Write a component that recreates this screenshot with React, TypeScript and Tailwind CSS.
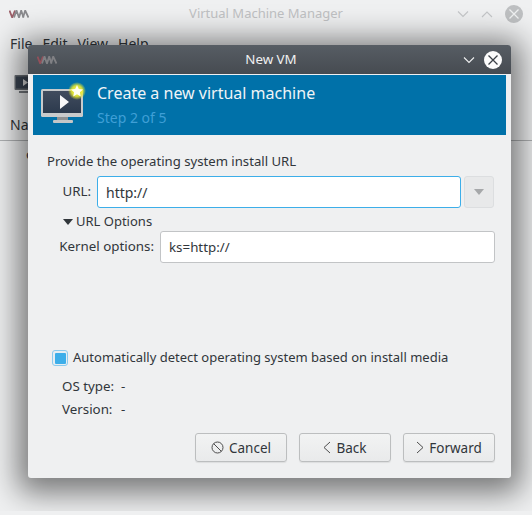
import React from "react";

function VmmLogo({ className }: { className?: string }) {
  return (
    <svg className={className} width="20" height="8" viewBox="0 0 20 8" fill="none" strokeWidth="1.8">
      <path d="M0.5 0.5 L3.2 7.5 L6 0.5" stroke="#93505a" />
      <path d="M5 7.5 L7.5 0.5 L10 7.5 L12.2 0.5 L14.5 7.5" stroke="#808084" />
      <path d="M14 7.5 L16.2 0.5 L19.5 7.5" stroke="#808084" />
    </svg>
  );
}

function MonitorIcon() {
  return (
    <svg width="46" height="46" viewBox="0 0 46 46">
      <defs>
        <radialGradient id="glow">
          <stop offset="0" stopColor="#ffff60" />
          <stop offset="0.6" stopColor="#e8ea30" stopOpacity="0.9" />
          <stop offset="1" stopColor="#e8ea30" stopOpacity="0" />
        </radialGradient>
        <linearGradient id="scr" x1="0" y1="0" x2="0" y2="1">
          <stop offset="0" stopColor="#414c5e" />
          <stop offset="1" stopColor="#2c3a4d" />
        </linearGradient>
      </defs>
      <rect x="0" y="7" width="42" height="28" rx="1.5" fill="#c8cacb" />
      <rect x="2" y="9" width="38" height="22" fill="url(#scr)" />
      <rect x="16" y="35" width="11" height="3" fill="#8f9192" />
      <rect x="12" y="38" width="20" height="3" rx="1" fill="#c4c6c7" />
      <path d="M19 13 L19 27 L28 20 Z" fill="#f8f8f8" />
      <circle cx="36" cy="9" r="9" fill="url(#glow)" />
      <path d="M36 3 L37.8 7 L42 7.5 L38.9 10.3 L39.8 14.5 L36 12.3 L32.2 14.5 L33.1 10.3 L30 7.5 L34.2 7 Z" fill="#fffff0" />
    </svg>
  );
}

function Chevron({ color, up }: { color: string; up?: boolean }) {
  return (
    <svg width="12" height="8" viewBox="0 0 12 8" fill="none" stroke={color} strokeWidth="1.1">
      <path d={up ? "M1 7 L6 2 L11 7" : "M1 1.5 L6 6.5 L11 1.5"} />
    </svg>
  );
}

function CloseCircle({ bg, fg }: { bg: string; fg: string }) {
  return (
    <svg width="18" height="18" viewBox="0 0 18 18">
      <circle cx="9" cy="9" r="9" fill={bg} />
      <path d="M4.5 4.5 L13.5 13.5 M13.5 4.5 L4.5 13.5" stroke={fg} strokeWidth="1.3" />
    </svg>
  );
}

function PushButton({ icon, label, width }: { icon: React.ReactNode; label: string; width: string }) {
  return (
    <div className={`${width} h-[29px] rounded-[3px] border border-[#bcbebf] bg-gradient-to-b from-[#f2f3f3] to-[#e9eaeb] shadow-[0_1px_1px_rgba(0,0,0,0.08)] flex items-center justify-center gap-[5px] text-[#31363b] text-[13.5px]`}>
      {icon}
      <span className="pt-[1px]">{label}</span>
    </div>
  );
}

export default function App() {
  return (
    <div className="relative w-[532px] h-[515px] overflow-hidden bg-[#eff0f1] text-[13.33px] text-[#31363b] font-['Noto_Sans',sans-serif]">
      {/* parent window */}
      <div className="h-[28px] flex items-center pl-[9px] pr-[9px] text-[#bfc1c3]">
        <VmmLogo className="opacity-90" />
        <span className="flex-1 text-center pl-[46px] text-[13px]">Virtual Machine Manager</span>
        <div className="flex items-center gap-[12px]">
          <Chevron color="#c4c6c8" />
          <Chevron color="#c4c6c8" up />
          <CloseCircle bg="#bec0c2" fg="#eff0f1" />
        </div>
      </div>
      <div className="flex gap-[10px] pl-[10px] pt-[6px] h-[46px] leading-[20px] text-[14px]">
        <span>File</span>
        <span>Edit</span>
        <span>View</span>
        <span>Help</span>
      </div>
      <div className="pl-[14px] h-[40px]">
        <svg width="22" height="22" viewBox="0 0 22 22">
          <rect x="0.5" y="1" width="21" height="15" rx="1" fill="#6b7076" />
          <rect x="2" y="2.5" width="18" height="12" fill="#3c4654" />
          <path d="M9 5 L9 12 L14 8.5 Z" fill="#ddd" />
          <rect x="5" y="17" width="12" height="2" fill="#777b80" />
        </svg>
      </div>
      <div className="pl-[10px] h-[26px] leading-[22px] text-[14px]">Name</div>
      <div className="border-t border-[#b0b2b4] pl-[26px] pt-[4px]">c</div>

      {/* dialog */}
      <div className="absolute left-[28px] top-[45px] w-[483px] h-[433px] rounded-[3px] bg-[#eff0f1] shadow-[0_5px_30px_10px_rgba(0,0,0,0.5)] flex flex-col overflow-hidden">
        <div className="h-[29px] shrink-0 bg-gradient-to-b from-[#575d64] to-[#464b51] flex items-center px-[9px] text-[#eff0f1]">
          <VmmLogo />
          <span className="flex-1 text-center pl-[22px]">New VM</span>
          <div className="flex items-center gap-[9px]">
            <Chevron color="#eff0f1" />
            <CloseCircle bg="#fcfcfc" fg="#3c4147" />
          </div>
        </div>
        <div className="mx-[5px] mt-[1px] h-[60px] shrink-0 bg-[#0071a9] flex items-center pl-[8px]">
          <MonitorIcon />
          <div className="ml-[10px]">
            <div className="text-[16px] leading-[22px] text-[#eff4f7]">Create a new virtual machine</div>
            <div className="text-[14px] leading-[21px] mt-[3px] text-[#3f9fd6]">Step 2 of 5</div>
          </div>
        </div>
        <div className="flex-1 flex flex-col pl-[19px] pr-[16px] pt-[16px] whitespace-nowrap">
          <div className="h-[20px] leading-[20px] text-[13.15px]">Provide the operating system install URL</div>
          <div className="flex items-center mt-[5px]">
            <span className="w-[44px] text-right">URL:</span>
            <div className="ml-[6px] w-[364px] h-[32px] rounded-[3px] border border-[#3daee9] bg-white flex items-center pl-[8px] text-[14px]">http://</div>
            <div className="ml-[3px] w-[30px] h-[32px] rounded-[3px] border border-[#dcdee0] bg-[#e8e9ea] flex items-center justify-center">
              <svg width="10" height="6" viewBox="0 0 10 6"><path d="M0 0 H10 L5 6 Z" fill="#a6a8aa" /></svg>
            </div>
          </div>
          <div className="flex items-center mt-[4px] pl-[16px] h-[20px]">
            <svg width="10" height="6" viewBox="0 0 10 6"><path d="M0 0 H10 L5 6 Z" fill="#31363b" /></svg>
            <span className="ml-[3px] text-[13px]">URL Options</span>
          </div>
          <div className="flex items-center mt-[-1px]">
            <span className="w-[107px] text-right">Kernel options:</span>
            <div className="ml-[6px] w-[335px] h-[32px] rounded-[3px] border border-[#c2c4c6] bg-white flex items-center pl-[8px] pt-[1px]">ks=http://</div>
          </div>
          <div className="flex items-center mt-[85px] pl-[5px] h-[20px]">
            <div className="w-[16px] h-[16px] rounded-[3px] border border-[#8ccbed] bg-[#e6eef3] flex items-center justify-center">
              <div className="w-[11px] h-[11px] rounded-[1px] bg-[#3daee9]" />
            </div>
            <span className="ml-[5px] text-[13px]">Automatically detect operating system based on install media</span>
          </div>
          <div className="mt-[8px] pl-[15px] h-[21px] leading-[21px] flex">
            <span className="w-[52px]">OS type:</span>
            <span className="ml-[7px]">-</span>
          </div>
          <div className="mt-[2px] pl-[15px] h-[21px] leading-[21px] flex">
            <span className="w-[52px]">Version:</span>
            <span className="ml-[7px]">-</span>
          </div>
          <div className="flex justify-end gap-[12px] mt-[13px]">
            <PushButton
              width="w-[92px]"
              label="Cancel"
              icon={
                <svg width="13" height="13" viewBox="0 0 13 13" fill="none" stroke="#4d4d4d" strokeWidth="1">
                  <circle cx="6.5" cy="6.5" r="5.5" />
                  <path d="M2.6 2.6 L10.4 10.4" />
                </svg>
              }
            />
            <PushButton
              width="w-[92px]"
              label="Back"
              icon={
                <svg width="8" height="13" viewBox="0 0 8 13" fill="none" stroke="#4d4d4d" strokeWidth="1">
                  <path d="M7 1 L1 6.5 L7 12" />
                </svg>
              }
            />
            <PushButton
              width="w-[92px]"
              label="Forward"
              icon={
                <svg width="8" height="13" viewBox="0 0 8 13" fill="none" stroke="#4d4d4d" strokeWidth="1">
                  <path d="M1 1 L7 6.5 L1 12" />
                </svg>
              }
            />
          </div>
        </div>
      </div>
      {/* bottom edge of the parent window, where the dialog shadow ends */}
      <div className="absolute left-0 right-0 bottom-0 h-[4px] bg-[#eff0f1]" />
    </div>
  );
}
